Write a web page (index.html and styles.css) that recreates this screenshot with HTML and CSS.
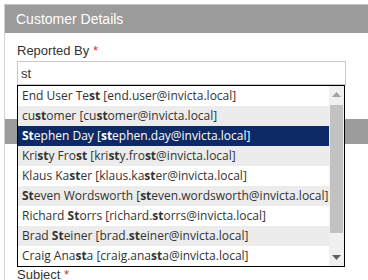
FILE: index.html
```html
<!DOCTYPE html>
<html lang="en">
<head>
  <meta charset="UTF-8" />
  <title>Customer Details</title>
  <link rel="stylesheet" href="styles.css">
</head>
<body>
  <div class="panel">
    <div class="panel-head">Customer Details</div>
    <div class="panel-body">
      <div class="field">
        <label class="label">Reported By <span class="req">*</span></label>
        <div class="combo">
          <input class="input" type="text" value="st">
          <div class="dropdown">
            <ul class="list">
              <li>End User Te<b>st</b> [end.user@invicta.local]</li>
              <li class="alt">cu<b>st</b>omer [cu<b>st</b>omer@invicta.local]</li>
              <li class="sel"><b>St</b>ephen Day [<b>st</b>ephen.day@invicta.local]</li>
              <li class="alt">Kri<b>st</b>y Fro<b>st</b> [kri<b>st</b>y.fro<b>st</b>@invicta.local]</li>
              <li>Klaus Ka<b>st</b>er [klaus.ka<b>st</b>er@invicta.local]</li>
              <li class="alt"><b>St</b>even Wordsworth [<b>st</b>even.wordsworth@invicta.local]</li>
              <li>Richard <b>St</b>orrs [richard.<b>st</b>orrs@invicta.local]</li>
              <li class="alt">Brad <b>St</b>einer [brad.<b>st</b>einer@invicta.local]</li>
              <li>Craig Ana<b>st</b>a [craig.ana<b>st</b>a@invicta.local]</li>
            </ul>
            <div class="scrollbar">
              <div class="arrow">
                <svg width="9" height="5" viewBox="0 0 9 5"><path d="M0 5 L4.5 0 L9 5 Z" fill="#a3a3a3"/></svg>
              </div>
              <div class="track"><div class="thumb"></div></div>
              <div class="arrow">
                <svg width="9" height="5" viewBox="0 0 9 5"><path d="M0 0 L9 0 L4.5 5 Z" fill="#606060"/></svg>
              </div>
            </div>
          </div>
        </div>
      </div>
      <div class="sub-head"></div>
      <div class="spacer"></div>
      <div class="field">
        <label class="label">Subject <span class="req">*</span></label>
      </div>
    </div>
  </div>
</body>
</html>
```

FILE: styles.css
```css
* {
  box-sizing: border-box;
  margin: 0;
  padding: 0;
}
body {
  font-family: 'Liberation Sans', Arial, sans-serif;
  background: #fff;
  color: #333;
  padding: 4px 0 0 4px;
  height: 280px;
  overflow: hidden;
}
.panel {
  border-left: 1px solid #d4d4d4;
  border-top: 1px solid #c4c4c4;
  height: 276px;
  overflow: hidden;
}
.panel-head {
  background: #9b9b9b;
  color: #fff;
  font-size: 14px;
  height: 28px;
  line-height: 28px;
  padding-left: 11px;
}
.panel-body {
  padding: 10px 22px 0 12px;
}
.label {
  display: block;
  font-size: 13px;
  line-height: 16px;
  margin-bottom: 2px;
}
.req {
  color: #d9302c;
}
.combo {
  position: relative;
}
.input {
  display: block;
  width: 100%;
  height: 24px;
  border: 1px solid #c8c8c8;
  padding: 0 3px;
  font-family: 'Liberation Sans', Arial, sans-serif;
  font-size: 13px;
  color: #333;
  outline: none;
}
.dropdown {
  position: absolute;
  top: 24px;
  left: 0;
  width: 328px;
  height: 182px;
  border: 1px solid #000;
  background: #fff;
  display: flex;
  z-index: 2;
}
.list {
  list-style: none;
  flex: 1;
  font-family: 'Open Sans', 'Noto Sans', sans-serif;
  font-size: 12px;
  color: #333;
}
.list li {
  height: 20px;
  line-height: 20px;
  padding-left: 4px;
  white-space: nowrap;
  overflow: hidden;
}
.list b {
  font-weight: 700;
}
.list .alt {
  background: #ececec;
}
.list .sel {
  background: #0e2a66;
  color: #fff;
}
.scrollbar {
  width: 17px;
  background: #f0f0f0;
  display: flex;
  flex-direction: column;
}
.arrow {
  height: 17px;
  display: flex;
  align-items: center;
  justify-content: center;
}
.track {
  flex: 1;
  padding: 2px 1px 0;
}
.thumb {
  height: 128px;
  background: #c2c2c2;
}
.sub-head {
  background: #9b9b9b;
  height: 25px;
  margin: 34px -22px 0 -12px;
}
.spacer {
  height: 123px;
}
```
